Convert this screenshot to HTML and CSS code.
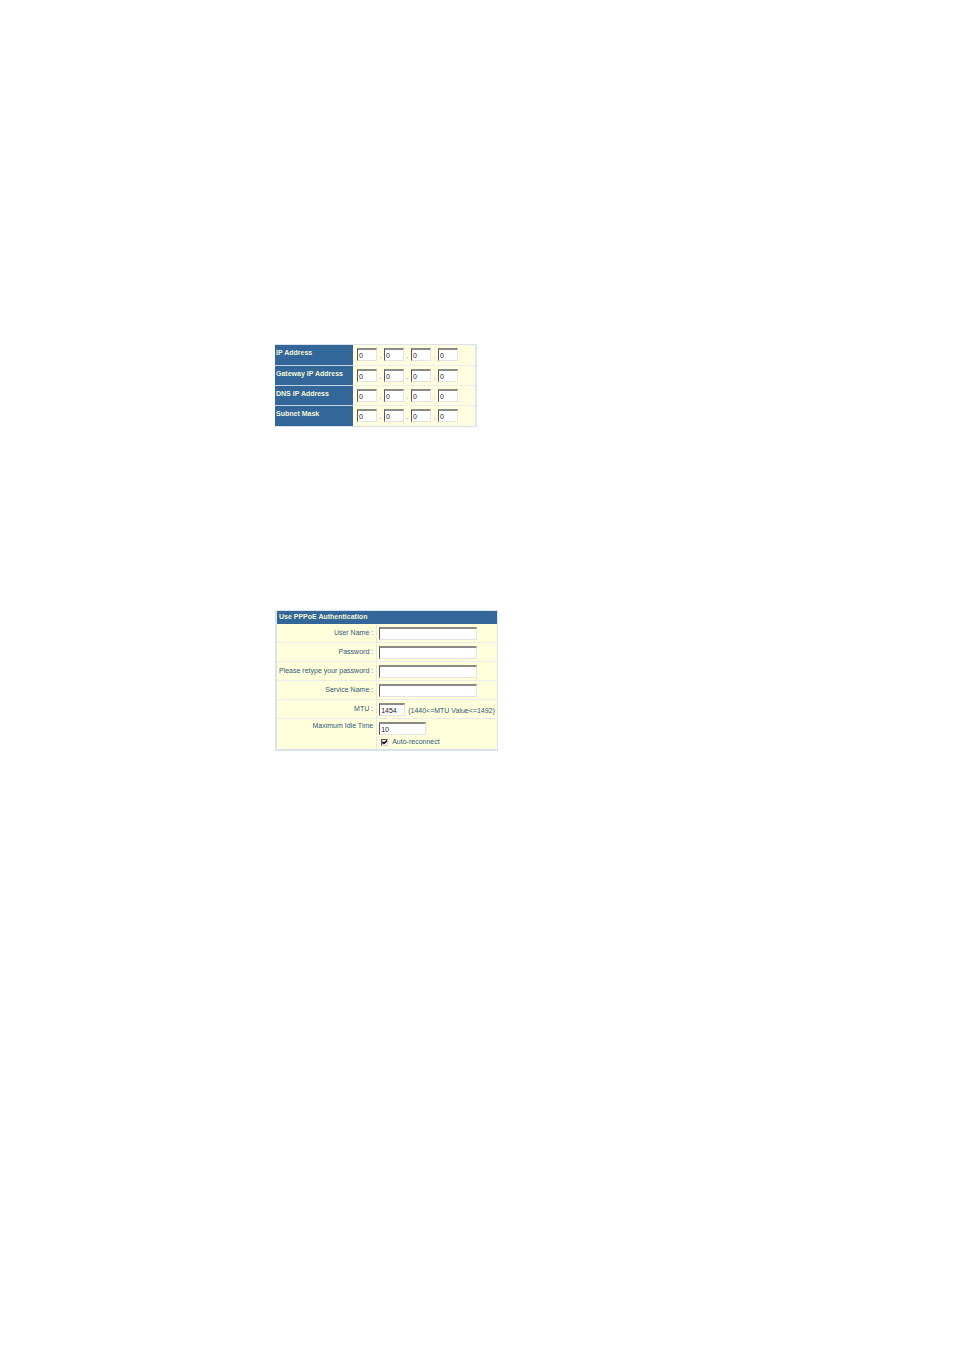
FILE: index.html
```html
<!DOCTYPE html>
<html lang="en">
<head>
<meta charset="utf-8">
<title>WAN Settings</title>
<link rel="stylesheet" href="styles.css">
</head>
<body>
<main class="page">
  <form class="forms">
    <table class="addresses">
      <tbody>
        <tr>
          <th scope="row">IP Address</th>
          <td><div class="octets"><input type="text" value="0" aria-label="IP Address 1"><span>.</span><input type="text" value="0" aria-label="IP Address 2"><span>.</span><input type="text" value="0" aria-label="IP Address 3"><span>.</span><input type="text" value="0" aria-label="IP Address 4"></div></td>
        </tr>
        <tr>
          <th scope="row">Gateway IP Address</th>
          <td><div class="octets"><input type="text" value="0" aria-label="Gateway IP Address 1"><span>.</span><input type="text" value="0" aria-label="Gateway IP Address 2"><span>.</span><input type="text" value="0" aria-label="Gateway IP Address 3"><span>.</span><input type="text" value="0" aria-label="Gateway IP Address 4"></div></td>
        </tr>
        <tr>
          <th scope="row">DNS IP Address</th>
          <td><div class="octets"><input type="text" value="0" aria-label="DNS IP Address 1"><span>.</span><input type="text" value="0" aria-label="DNS IP Address 2"><span>.</span><input type="text" value="0" aria-label="DNS IP Address 3"><span>.</span><input type="text" value="0" aria-label="DNS IP Address 4"></div></td>
        </tr>
        <tr>
          <th scope="row">Subnet Mask</th>
          <td><div class="octets"><input type="text" value="0" aria-label="Subnet Mask 1"><span>.</span><input type="text" value="0" aria-label="Subnet Mask 2"><span>.</span><input type="text" value="0" aria-label="Subnet Mask 3"><span>.</span><input type="text" value="0" aria-label="Subnet Mask 4"></div></td>
        </tr>
      </tbody>
    </table>

    <table class="pppoe">
      <thead>
        <tr><th colspan="2" scope="colgroup">Use PPPoE Authentication</th></tr>
      </thead>
      <tbody>
        <tr>
          <th scope="row"><label for="user">User Name :</label></th>
          <td><div class="field"><input class="wide" type="text" id="user"></div></td>
        </tr>
        <tr>
          <th scope="row"><label for="pass">Password :</label></th>
          <td><div class="field"><input class="wide" type="password" id="pass"></div></td>
        </tr>
        <tr>
          <th scope="row"><label for="retype">Please retype your password :</label></th>
          <td><div class="field"><input class="wide" type="password" id="retype"></div></td>
        </tr>
        <tr>
          <th scope="row"><label for="service">Service Name :</label></th>
          <td><div class="field"><input class="wide" type="text" id="service"></div></td>
        </tr>
        <tr>
          <th scope="row"><label for="mtu">MTU :</label></th>
          <td><div class="field"><input class="short" type="text" id="mtu" value="1454"><span class="hint">(1440&lt;=MTU Value&lt;=1492)</span></div></td>
        </tr>
        <tr class="idle-row">
          <th scope="row"><label for="idle">Maximum Idle Time</label></th>
          <td>
            <div class="field"><input class="medium" type="text" id="idle" value="10"></div>
            <label class="check"><input type="checkbox" checked>Auto-reconnect</label>
          </td>
        </tr>
      </tbody>
    </table>
  </form>
</main>
</body>
</html>
```
FILE: styles.css
```css
* {
  box-sizing: border-box;
}

body {
  margin: 0;
  background: #fff;
  color: #2f587c;
  font: 7px/10px "Liberation Sans", Arial, sans-serif;
}

.page {
  padding: 344px 24px 24px 275px;
}

.forms {
  display: flex;
  flex-direction: column;
  align-items: flex-start;
  gap: 183px;
}

table {
  border-collapse: separate;
  border-spacing: 0;
}

th,
td {
  padding: 0;
  vertical-align: top;
}

input[type="text"],
input[type="password"] {
  height: 13px;
  margin: 0;
  padding: 0 1px;
  border: 1px solid #e2e2e2;
  border-top: 2px solid #8a8a86;
  border-left: 1px solid #555;
  border-radius: 0;
  outline: 0;
  background: #fff;
  color: #222;
  font: inherit;
}

/* IP address table */
.addresses {
  border-top: 1px solid #d9e3ec;
  border-right: 2px solid #dbe5ed;
  border-bottom: 1px solid #d9e3ec;
}

.addresses tr {
  height: 20px;
}

.addresses tr:first-child {
  height: 21px;
}

.addresses th {
  width: 78px;
  padding: 3px 0 0 1px;
  border-bottom: 1px solid #c3d3e2;
  background: #336699;
  color: #f5f8d8;
  text-align: left;
}

.addresses td {
  padding: 3px 17px 0 4px;
  border-bottom: 1px solid #e6edea;
  background: #ffffe0;
}

.addresses tr:last-child > * {
  border-bottom: 0;
}

.octets {
  display: flex;
}

.octets input {
  width: 20px;
}

.octets span {
  width: 7px;
  padding-top: 3px;
  text-align: center;
}

/* PPPoE table */
.pppoe {
  border: 1px solid #d9e3ec;
  border-left-width: 2px;
  border-bottom-width: 2px;
}

.pppoe thead th {
  height: 13px;
  padding: 1px 2px 2px;
  background: #336699;
  color: #f5f8d8;
  text-align: left;
}

.pppoe tbody tr {
  height: 19px;
}

.pppoe tbody th {
  width: 100px;
  padding: 4px 3px 0 2px;
  border-right: 1px solid #e3eae6;
  border-bottom: 1px solid #e6edea;
  background: #ffffdb;
  font-weight: normal;
  text-align: right;
  white-space: nowrap;
}

.pppoe td {
  width: 119px;
  padding: 3px 2px 0;
  border-bottom: 1px solid #e6edea;
  background: #ffffdb;
  white-space: nowrap;
}

.pppoe tbody tr:last-child > * {
  border-bottom: 0;
}

.pppoe .idle-row {
  height: 30px;
}

.pppoe .idle-row th {
  padding-top: 2px;
}

.field {
  display: flex;
  gap: 3px;
}

.field .wide {
  width: 98px;
}

.field .medium {
  width: 47px;
}

.field .short {
  width: 26px;
}

.hint {
  padding-top: 3px;
}

.check {
  display: flex;
  align-items: center;
  gap: 4px;
  padding: 2px 0 0 2px;
}

.check input {
  display: grid;
  place-content: center;
  width: 7px;
  height: 7px;
  margin: 0;
  border: 1px solid #ccc;
  border-top-color: #555;
  border-left-color: #555;
  background: #fff;
  appearance: none;
}

.check input:checked::before {
  content: "";
  width: 5px;
  height: 5px;
  background: #111;
  clip-path: polygon(0 30%, 35% 55%, 100% 0, 100% 45%, 35% 100%, 0 75%);
}
```
